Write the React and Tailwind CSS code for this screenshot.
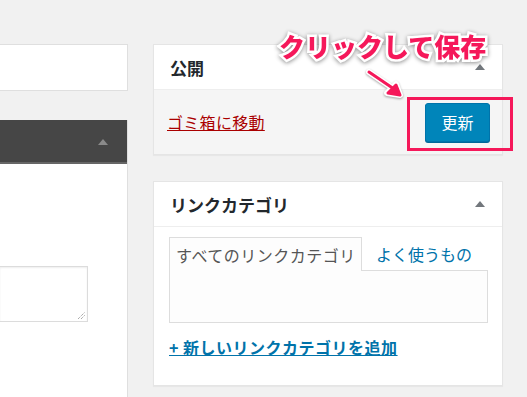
import React from "react";

const jp = { fontFamily: '"Noto Sans CJK JP", "Noto Sans", sans-serif' };

function Tri() {
  return (
    <svg width="10" height="6" viewBox="0 0 10 6" className="block">
      <polygon points="5,0 10,6 0,6" fill="#72777c" />
    </svg>
  );
}

export default function App() {
  return (
    <div
      className="relative w-[527px] h-[397px] bg-[#f1f1f1] overflow-hidden flex"
      style={jp}
    >
      {/* left column */}
      <div className="w-[128px] flex flex-col pt-[44px] shrink-0">
        <div className="h-[47px] bg-white border border-l-0 border-[#dfdfdf]" />
        <div className="mt-[29px] flex-1 flex flex-col border-r border-[#dfdfdf]">
          <div className="h-[44px] bg-[#464646] border-b-2 border-[#666] flex items-center justify-end pr-[19px]">
            <svg width="10" height="6" viewBox="0 0 10 6" className="block mt-[2px]">
              <polygon points="5,0 10,6 0,6" fill="#8a8a8a" />
            </svg>
          </div>
          <div className="flex-1 bg-white pt-[102px]">
            <div className="relative w-[88px] h-[56px] border border-l-0 border-[#dcdcdc] bg-white shadow-[inset_0_1px_2px_rgba(0,0,0,0.07)]">
              <svg width="8" height="8" viewBox="0 0 8 8" className="absolute right-[2px] bottom-[2px]">
                <line x1="1" y1="8" x2="8" y2="1" stroke="#888" strokeWidth="1" strokeDasharray="1 1" />
                <line x1="4" y1="8" x2="8" y2="4" stroke="#888" strokeWidth="1" strokeDasharray="1 1" />
              </svg>
            </div>
          </div>
        </div>
      </div>

      {/* right column */}
      <div className="ml-[25px] w-[350px] pt-[44px] flex flex-col shrink-0">
        {/* publish box */}
        <div className="bg-white border border-[#e5e5e5] shadow-[0_1px_1px_rgba(0,0,0,0.04)]">
          <div className="h-[45px] flex items-center justify-between pl-[16px] pr-[17px] border-b border-[#eeeeee]">
            <span className="text-[17px] font-bold text-[#23282d] leading-none">公開</span>
            <Tri />
          </div>
          <div className="h-[64px] bg-[#f5f5f5] flex items-center justify-between pl-[13px] pr-[12px]">
            <a className="text-[16px] text-[#a00] underline leading-none tracking-[0.3px]">ゴミ箱に移動</a>
            <button className="w-[65px] h-[39px] rounded-[3px] bg-[#0085ba] border border-[#0073aa] shadow-[0_1px_0_#006799] text-white text-[16px] leading-none">
              更新
            </button>
          </div>
        </div>

        {/* link category box */}
        <div className="mt-[26px] h-[205px] bg-white border border-[#e5e5e5] shadow-[0_1px_1px_rgba(0,0,0,0.04)] flex flex-col">
          <div className="h-[45px] shrink-0 flex items-center justify-between pl-[16px] pr-[17px] border-b border-[#eeeeee]">
            <span className="text-[17px] font-bold text-[#23282d] leading-none">リンクカテゴリ</span>
            <Tri />
          </div>
          <div className="pl-[15px] pr-[14px] pt-[10px]">
            <div className="flex items-end">
              <div className="relative z-10 h-[34px] w-[193px] border border-b-0 border-[#dddddd] bg-[#fdfdfd] flex items-center pl-[6px] text-[16px] text-[#555] leading-none tracking-[0.5px] -mb-px">
                すべてのリンクカテゴリ
              </div>
              <div className="h-[33px] flex items-center pl-[14px] text-[16px] text-[#0073aa] leading-none">
                よく使うもの
              </div>
            </div>
            <div className="h-[53px] border border-[#dddddd] bg-[#fdfdfd]" />
            <div className="mt-[12px]">
              <a className="text-[16px] font-bold text-[#0073aa] underline leading-none tracking-[0.5px]">
                + 新しいリンクカテゴリを追加
              </a>
            </div>
          </div>
        </div>
      </div>

      {/* annotation overlay */}
      <div
        className="absolute left-[279px] top-[33px] text-[26px] font-black text-[#f5185a] leading-none [paint-order:stroke_fill] [-webkit-text-stroke:5px_white] drop-shadow-[0_1px_2px_rgba(0,0,0,0.45)]"
      >
        クリックして保存
      </div>
      <svg
        className="absolute left-[360px] top-[64px] drop-shadow-[0_1px_1px_rgba(0,0,0,0.35)]"
        width="50"
        height="40"
        viewBox="0 0 50 40"
      >
        <g stroke="white" strokeWidth="6" strokeLinecap="round" strokeLinejoin="round" fill="white">
          <line x1="9" y1="8" x2="34" y2="25" />
          <polygon points="40,31 27,29 36,20" />
        </g>
        <g stroke="#f5185a" strokeWidth="3" strokeLinecap="round" strokeLinejoin="round" fill="#f5185a">
          <line x1="9" y1="8" x2="34" y2="25" />
          <polygon points="40,31 28,29 36,21" />
        </g>
      </svg>
      <div className="absolute left-[407px] top-[97px] w-[106px] h-[54px] border-[3px] border-[#f5185a]" />
    </div>
  );
}
